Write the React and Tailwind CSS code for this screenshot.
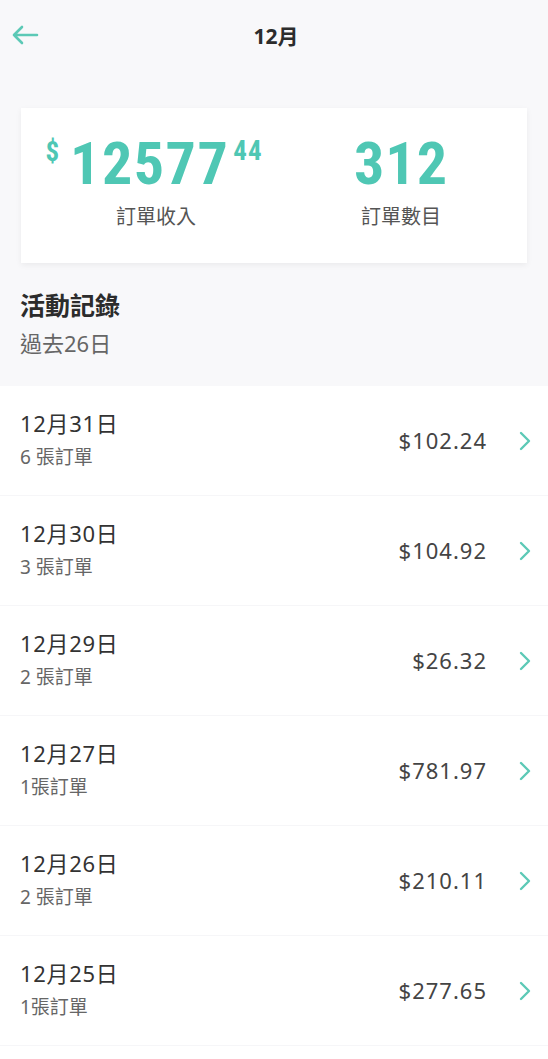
import React from 'react';

const rows = [
    { date: '12月31日', count: '6 張訂單', amount: '$102.24' },
    { date: '12月30日', count: '3 張訂單', amount: '$104.92' },
    { date: '12月29日', count: '2 張訂單', amount: '$26.32' },
    { date: '12月27日', count: '1張訂單', amount: '$781.97' },
    { date: '12月26日', count: '2 張訂單', amount: '$210.11' },
    { date: '12月25日', count: '1張訂單', amount: '$277.65' },
];

const font = { fontFamily: '"Noto Sans", "Noto Sans CJK TC", sans-serif' };
const narrow = { fontFamily: '"Liberation Sans Narrow", "Roboto Condensed", "Liberation Sans", sans-serif' };

function Chevron() {
    return (
        <svg width="14" height="22" viewBox="0 0 14 22" fill="none">
            <path d="M3 3l8 8-8 8" stroke="#5cc9b6" strokeWidth="2.4" strokeLinecap="round" strokeLinejoin="round" />
        </svg>
    );
}

export default function App() {
    return (
        <div className="w-[548px] h-[1059px] overflow-hidden bg-[#f8f8fa] text-[#333] flex flex-col" style={font}>
            <div className="relative h-[74px] shrink-0 flex items-center justify-center">
                <svg className="absolute left-[11px] top-[24px]" width="28" height="22" viewBox="0 0 28 22" fill="none">
                    <path d="M26 11H3M11 3l-8 8 8 8" stroke="#5cc9b6" strokeWidth="2.6" strokeLinecap="round" strokeLinejoin="round" />
                </svg>
                <div className="text-[21px] font-bold text-[#2c2c2c] ml-[4px]">12月</div>
            </div>

            <div className="mx-[21px] mt-[34px] h-[155px] shrink-0 bg-white shadow-[0_2px_6px_rgba(0,0,0,0.06)] flex">
                <div className="w-[270px] flex flex-col items-center pt-[26px]">
                    <div className="flex items-start text-[#4fc7b4] font-bold ml-[-4px]" style={narrow}>
                        <span className="text-[27px] leading-none mt-[5px] mr-[11px]">$</span>
                        <span className="text-[60px] leading-none tracking-[1.5px]">12577</span>
                        <span className="text-[27px] leading-none mt-[4px] ml-[4px] tracking-[1px]">44</span>
                    </div>
                    <div className="text-[20px] text-[#555] mt-[8px]">訂單收入</div>
                </div>
                <div className="w-[220px] flex flex-col items-center pt-[26px]">
                    <div className="text-[#4fc7b4] font-bold text-[60px] leading-none tracking-[1px]" style={narrow}>312</div>
                    <div className="text-[20px] text-[#555] mt-[8px]">訂單數目</div>
                </div>
            </div>

            <div className="px-[20px] pt-[25px] h-[123px] shrink-0">
                <div className="text-[25px] font-bold text-[#2c2c2c] leading-[34px]">活動記錄</div>
                <div className="text-[22px] text-[#666] leading-[30px] mt-[6px]">過去26日</div>
            </div>

            <div className="bg-white flex-1">
                {rows.map((r, i) => (
                    <div key={i} className="h-[110px] flex items-center pl-[20px] pr-[16px] border-b border-[#f6f6f8]">
                        <div className="flex-1 -mt-[4px]">
                            <div className="text-[22px] text-[#333] leading-[30px] tracking-[0.7px]">{r.date}</div>
                            <div className="text-[19px] text-[#666] leading-[26px] mt-[6px]">{r.count}</div>
                        </div>
                        <div className="text-[22px] text-[#444] mr-[31px] tracking-[1px]">{r.amount}</div>
                        <Chevron />
                    </div>
                ))}
            </div>
        </div>
    );
}
